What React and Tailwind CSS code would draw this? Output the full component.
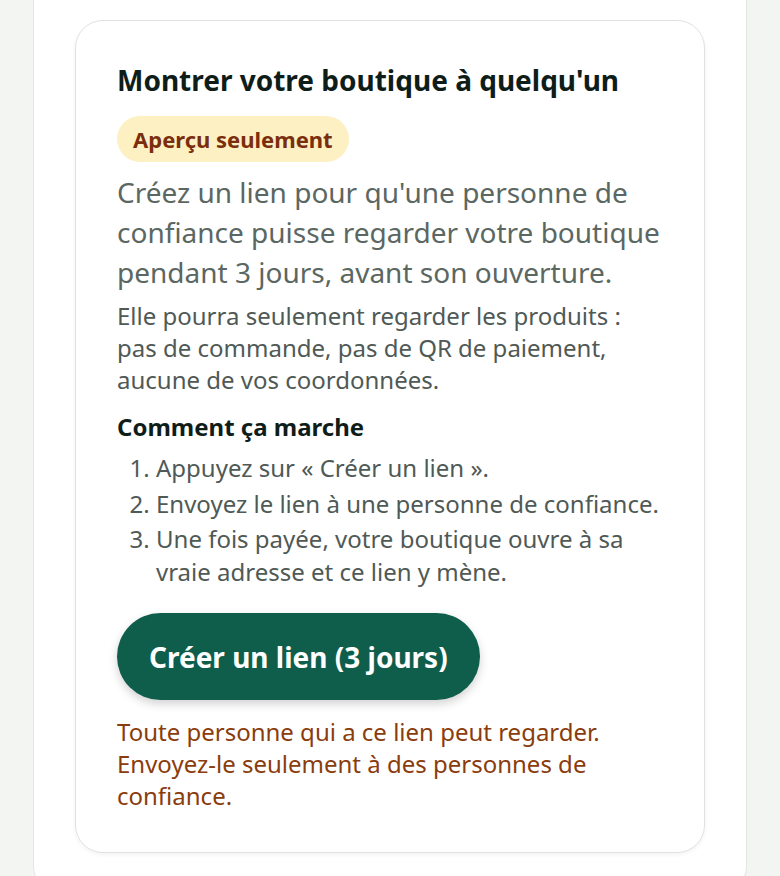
import React from "react";

const steps = [
    "Appuyez sur « Créer un lien ».",
    "Envoyez le lien à une personne de confiance.",
    "Une fois payée, votre boutique ouvre à sa vraie adresse et ce lien y mène.",
];

function PreviewLinkCard() {
    return (
        <div className="rounded-[28px] border border-[#e0e2e0] bg-white px-[41px] pt-[42px] pb-[40px] shadow-[0_2px_4px_rgba(0,0,0,0.05)]">
            <h2 className="text-[28px] font-bold leading-[34px] text-[#0f1d19]">
                Montrer votre boutique à quelqu'un
            </h2>
            <span className="mt-[19px] inline-flex h-[46px] items-center rounded-full bg-[#fdf0c2] px-4 text-[22px] font-bold text-[#7a2e0e]">
                Aperçu seulement
            </span>
            <p className="mt-[10px] text-[28px] leading-[40px] text-[#5b6762]">
                Créez un lien pour qu'une personne de confiance puisse regarder votre boutique
                pendant 3 jours, avant son ouverture.
            </p>
            <p className="mt-2 text-[24px] leading-[32px] text-[#4f5955]">
                Elle pourra seulement regarder les produits : pas de commande, pas de QR de paiement,
                aucune de vos coordonnées.
            </p>
            <h3 className="mt-[15px] text-[24px] font-bold leading-[32px] text-[#0f1d19]">
                Comment ça marche
            </h3>
            <ol className="mt-2 list-decimal space-y-[2.5px] pl-[39px] text-[24px] leading-[33px] text-[#4f5955]">
                {steps.map((s, i) => (
                    <li key={i}>{s}</li>
                ))}
            </ol>
            <button className="mt-[25px] h-[87px] rounded-full bg-[#0f5e4c] px-8 text-[28px] font-bold text-white shadow-[0_4px_10px_rgba(0,0,0,0.18)]">
                Créer un lien (3 jours)
            </button>
            <p className="mt-[16px] text-[24px] leading-[32px] text-[#8a3c0c]">
                Toute personne qui a ce lien peut regarder. Envoyez-le seulement à des personnes de
                confiance.
            </p>
        </div>
    );
}

export default function App() {
    return (
        <div className="h-[876px] overflow-hidden bg-[#f3f5f3] font-['Noto_Sans',sans-serif]">
            <div className="mx-[33px] rounded-b-[28px] border-x border-b border-[#e4e6e4] bg-white px-[41px] pt-5 pb-[40px]">
                <PreviewLinkCard />
            </div>
        </div>
    );
}
